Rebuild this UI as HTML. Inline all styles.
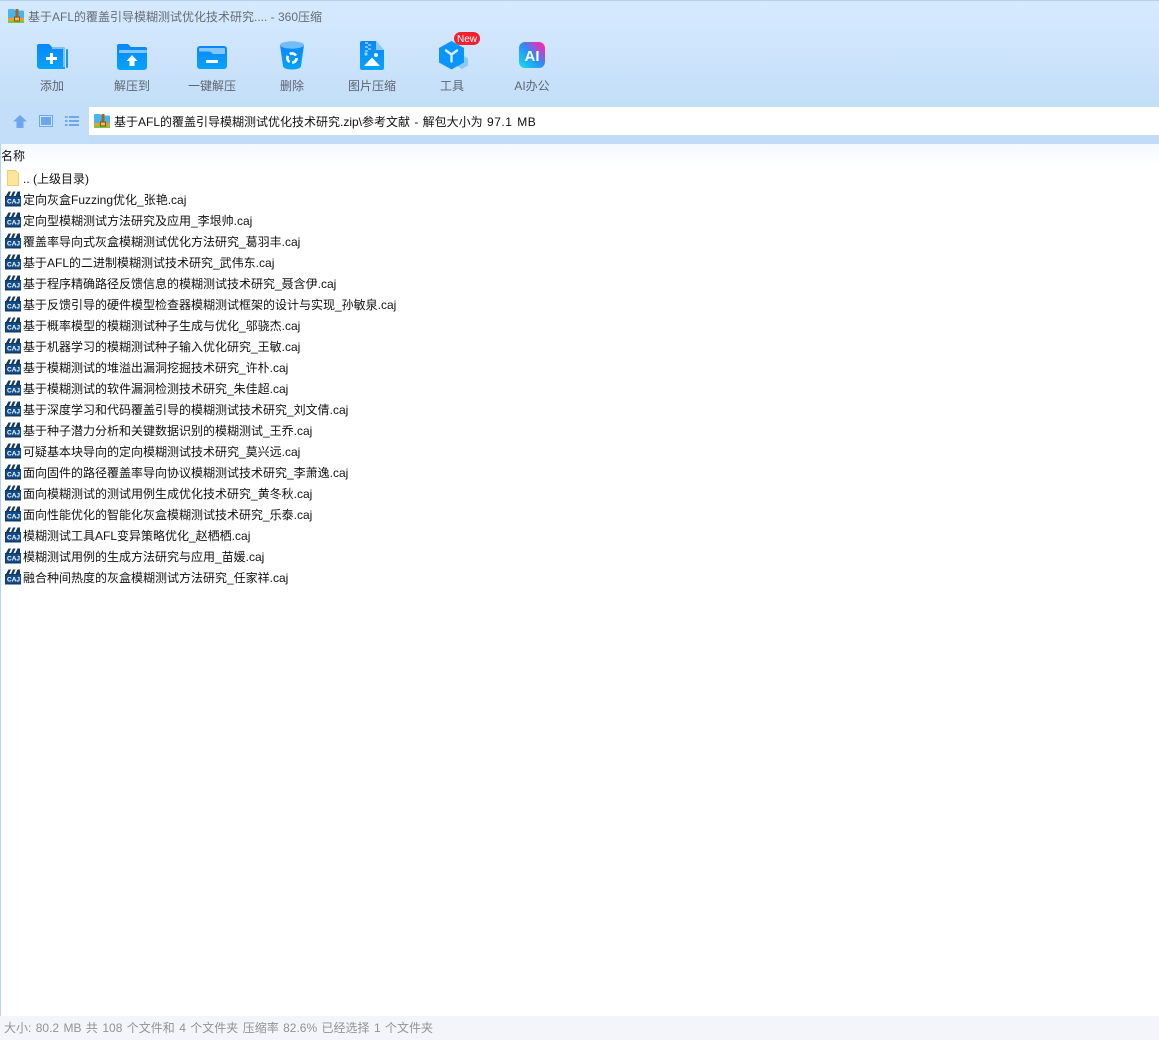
<!DOCTYPE html>
<html lang="zh"><head><meta charset="utf-8"><style>
*{box-sizing:border-box;margin:0;padding:0}
html,body{width:1159px;height:1040px;overflow:hidden;background:#fff;font-family:"Liberation Sans","Noto Sans CJK SC",sans-serif;font-size:12px;color:#111}
#top{position:absolute;left:0;top:0;width:1159px;height:107px;background:linear-gradient(#d6eaff,#c3def8);border-top:1px solid #b4d2ef}
#title{position:absolute;left:28px;top:9px;line-height:17px;color:#666c75;font-size:12px;white-space:nowrap}
.tb{position:absolute;top:78px;width:80px;text-align:center;line-height:16px;color:#5d6570;white-space:nowrap}
.i{position:absolute;overflow:visible}
#addr{position:absolute;left:89px;top:107px;width:1070px;height:28px;background:#fff;line-height:30px;padding-left:25px;color:#111;white-space:nowrap;word-spacing:1px}
#addr b{font-weight:400;letter-spacing:.5px}
#band{position:absolute;left:0;top:107px;width:89px;height:37px;background:#c3def8}
#band2{position:absolute;left:89px;top:135px;width:1070px;height:9px;background:#c2dcf7}
#grad{position:absolute;left:1px;top:144px;width:1158px;height:24px;background:linear-gradient(#f3f9ff,#fff)}
#ln{position:absolute;left:0;top:144px;width:1px;height:872px;background:#b5d4f4}
#hd{position:absolute;left:1px;top:148px;line-height:17px;color:#111}
.r{position:absolute;left:23px;margin-top:1px;line-height:17px;white-space:nowrap;color:#111}
#st{position:absolute;left:0;top:1016px;width:1159px;height:24px;background:#f3f5fa;color:#939393;line-height:25px;padding-left:4px;white-space:nowrap;word-spacing:1.08px}
</style></head><body>
<svg width="0" height="0" style="position:absolute"><defs>
<linearGradient id="b" x1="0" y1="0" x2="0" y2="1"><stop offset="0" stop-color="#0a86fb"/><stop offset="1" stop-color="#05a3fd"/></linearGradient>
<linearGradient id="ai" x1="0" y1="1" x2="1" y2="0"><stop offset="0" stop-color="#12e0ee"/><stop offset=".5" stop-color="#2a8ff5"/><stop offset=".85" stop-color="#e62fc0"/><stop offset="1" stop-color="#f5467a"/></linearGradient>
<symbol id="zip" viewBox="0 0 16 14"><path d="M1 0h5l1.500 1.500H15a1 1 0 0 1 1 1V9H0V1a1 1 0 0 1 1-1z" fill="#45b5f1"/><rect y="9" width="16" height="2.500" fill="#f79a1e"/><rect y="11.500" width="16" height="2.500" fill="#7cc54a"/><rect x="7.500" y="0" width="3" height="8" fill="#a5651f"/><rect x="6.500" y="8" width="5" height="4" fill="#f0c040" stroke="#8a4f12" stroke-width="1"/></symbol>
<symbol id="caj" viewBox="0 0 17 17"><path d="M1 6 3.500 1.500H6L4 6h2L8 1.500h2.500L8.500 6h2L12.500 1.500H15V6h1v10.500H0V6z" fill="#143a63"/><rect x="1" y="7" width="15" height="8" fill="#0f4d8c"/><text x="8.500" y="13.500" text-anchor="middle" font-size="6.500" font-weight="700" fill="#fff" font-family="Liberation Sans" textLength="13" lengthAdjust="spacingAndGlyphs">CAJ</text></symbol>
</defs></svg>
<div id="top"></div>
<svg class="i" style="left:8px;top:9px" width="16" height="14"><use href="#zip"/></svg>
<div id="title">基于AFL的覆盖引导模糊测试优化技术研究.... - 360压缩</div>

<svg class="i" style="left:37px;top:44px" width="31" height="26" viewBox="0 0 31 26"><path d="M2 0h10l3 3h11a2 2 0 0 1 2 2v20H3a3 3 0 0 1-3-3V2a2 2 0 0 1 2-2z" fill="url(#b)"/><path d="M15 3h11a2 2 0 0 1 2 2v18h-2V5H15z" fill="#7cc0fb"/><rect x="29" y="5" width="2" height="19" rx="1" fill="#1b94f6"/><path d="M13 9h3v4h4v3h-4v4h-3v-4H9v-3h4z" fill="#fff"/></svg>
<div class="tb" style="left:12px">添加</div>

<svg class="i" style="left:117px;top:44px" width="30" height="26" viewBox="0 0 30 26"><path d="M2 0h9l3 3h14a2 2 0 0 1 2 2v18a3 3 0 0 1-3 3H3a3 3 0 0 1-3-3V2a2 2 0 0 1 2-2z" fill="url(#b)"/><rect x="2" y="6" width="28" height="3" rx="1" fill="#83c6fb"/><path d="M15 11l5.500 6H17.500v5h-5v-5H9.500z" fill="#fff"/></svg>
<div class="tb" style="left:92px">解压到</div>

<svg class="i" style="left:197px;top:46px" width="30" height="24" viewBox="0 0 30 24"><rect width="30" height="23" rx="3" fill="url(#b)"/><path d="M3 2h24a1 1 0 0 1 1 1v5H16l-3-2.500H2V3a1 1 0 0 1 1-1z" fill="#83c6fb"/><rect x="9" y="14" width="12" height="3" rx="1" fill="#fff"/></svg>
<div class="tb" style="left:172px">一键解压</div>

<svg class="i" style="left:280px;top:41px" width="24" height="29" viewBox="0 0 24 29"><path d="M0 4 3 25c.4 2 3 3.500 9 3.500s8.600-1.500 9-3.500L24 4z" fill="url(#b)"/><ellipse cx="12" cy="4" rx="12" ry="3.700" fill="#72bdfb"/><circle cx="12" cy="17" r="4.600" fill="none" stroke="#fff" stroke-width="2.600" stroke-dasharray="7 2.600"/></svg>
<div class="tb" style="left:252px">删除</div>

<svg class="i" style="left:360px;top:41px" width="24" height="29" viewBox="0 0 24 29"><path d="M2 0h14l8 9v18a2 2 0 0 1-2 2H2a2 2 0 0 1-2-2V2a2 2 0 0 1 2-2z" fill="url(#b)"/><path d="M16 0l8 9h-8z" fill="#8cc8f8"/><path d="M5 1h3v2H5zM8 3h3v2H8zM5 5h3v2H5zM8 7h3v2H8zM5 9h3v2H5z" fill="#7cc0fb"/><circle cx="6" cy="13" r="1.600" fill="#9ed2fb"/><circle cx="16" cy="14" r="2" fill="#fff"/><path d="M4 25 12 16.500 20 25z" fill="#fff"/></svg>
<div class="tb" style="left:332px">图片压缩</div>

<svg class="i" style="left:439px;top:41px" width="30" height="29" viewBox="0 0 30 29"><path d="M23 14l6 3.500v7L23 28l-6-3.500v-7z" fill="#8cc6fb"/><path d="M12.500 0 25 7v14.500L12.500 28.500 0 21.500V7z" fill="#0a95fb"/><path d="M7 9.500l5.500 4 5.500-4M12.500 13.500V20.500" fill="none" stroke="#d8f0ff" stroke-width="2.400" stroke-linecap="round"/></svg>
<svg class="i" style="left:454px;top:32px" width="26" height="13" viewBox="0 0 26 13"><rect width="26" height="13" rx="6.500" fill="#f3212f"/><text x="13" y="10" text-anchor="middle" font-size="10" fill="#fff" font-family="Liberation Sans">New</text></svg>
<div class="tb" style="left:412px">工具</div>

<svg class="i" style="left:519px;top:42px" width="26" height="26" viewBox="0 0 26 26"><rect width="26" height="26" rx="6" fill="url(#ai)"/><text x="13" y="19" text-anchor="middle" font-size="15" font-weight="700" fill="#fff" font-family="Liberation Sans">AI</text></svg>
<div class="tb" style="left:492px">AI办公</div>

<div id="band"></div><div id="band2"></div>
<svg class="i" style="left:13px;top:115px" width="14" height="13" viewBox="0 0 14 13"><path d="M7 0 14 6.500H10.500V13H3.500V6.500H0z" fill="#6ba6ee"/></svg>
<svg class="i" style="left:39px;top:115px" width="14" height="12" viewBox="0 0 14 12"><rect x=".5" y=".5" width="13" height="11" fill="#cfe3fa" stroke="#6ba6ee"/><rect x="2" y="2" width="10" height="8" fill="#6ba6ee"/></svg>
<svg class="i" style="left:65px;top:115px" width="14" height="12" viewBox="0 0 14 12"><path d="M0 1h2.500v2H0zM4 1h10v2H4zM0 5h2.500v2H0zM4 5h10v2H4zM0 9h2.500v2H0zM4 9h10v2H4z" fill="#6ba6ee"/></svg>
<div id="addr">基于AFL的覆盖引导模糊测试优化技术研究.zip\参考文献 - 解包大小为 <b>97.1 MB</b></div>
<svg class="i" style="left:94px;top:114px" width="16" height="14"><use href="#zip"/></svg>
<div id="grad"></div><div id="ln"></div>
<div id="hd">名称</div>

<svg class="i" style="left:7px;top:170px" width="12" height="16" viewBox="0 0 12 16"><path d="M.500.500h7.500l3.500 3v12H.500z" fill="#fde59b" stroke="#f0cc70"/></svg>
<div class="r" style="top:170px">.. (上级目录)</div>

<svg class="i" style="left:5px;top:190px" width="17" height="17"><use href="#caj"/></svg><div class="r" style="top:191px">定向灰盒Fuzzing优化_张艳.caj</div>
<svg class="i" style="left:5px;top:211px" width="17" height="17"><use href="#caj"/></svg><div class="r" style="top:212px">定向型模糊测试方法研究及应用_李垠帅.caj</div>
<svg class="i" style="left:5px;top:232px" width="17" height="17"><use href="#caj"/></svg><div class="r" style="top:233px">覆盖率导向式灰盒模糊测试优化方法研究_葛羽丰.caj</div>
<svg class="i" style="left:5px;top:253px" width="17" height="17"><use href="#caj"/></svg><div class="r" style="top:254px">基于AFL的二进制模糊测试技术研究_武伟东.caj</div>
<svg class="i" style="left:5px;top:274px" width="17" height="17"><use href="#caj"/></svg><div class="r" style="top:275px">基于程序精确路径反馈信息的模糊测试技术研究_聂含伊.caj</div>
<svg class="i" style="left:5px;top:295px" width="17" height="17"><use href="#caj"/></svg><div class="r" style="top:296px">基于反馈引导的硬件模型检查器模糊测试框架的设计与实现_孙敏泉.caj</div>
<svg class="i" style="left:5px;top:316px" width="17" height="17"><use href="#caj"/></svg><div class="r" style="top:317px">基于概率模型的模糊测试种子生成与优化_邬骁杰.caj</div>
<svg class="i" style="left:5px;top:337px" width="17" height="17"><use href="#caj"/></svg><div class="r" style="top:338px">基于机器学习的模糊测试种子输入优化研究_王敏.caj</div>
<svg class="i" style="left:5px;top:358px" width="17" height="17"><use href="#caj"/></svg><div class="r" style="top:359px">基于模糊测试的堆溢出漏洞挖掘技术研究_许朴.caj</div>
<svg class="i" style="left:5px;top:379px" width="17" height="17"><use href="#caj"/></svg><div class="r" style="top:380px">基于模糊测试的软件漏洞检测技术研究_朱佳超.caj</div>
<svg class="i" style="left:5px;top:400px" width="17" height="17"><use href="#caj"/></svg><div class="r" style="top:401px">基于深度学习和代码覆盖引导的模糊测试技术研究_刘文倩.caj</div>
<svg class="i" style="left:5px;top:421px" width="17" height="17"><use href="#caj"/></svg><div class="r" style="top:422px">基于种子潜力分析和关键数据识别的模糊测试_王乔.caj</div>
<svg class="i" style="left:5px;top:442px" width="17" height="17"><use href="#caj"/></svg><div class="r" style="top:443px">可疑基本块导向的定向模糊测试技术研究_莫兴远.caj</div>
<svg class="i" style="left:5px;top:463px" width="17" height="17"><use href="#caj"/></svg><div class="r" style="top:464px">面向固件的路径覆盖率导向协议模糊测试技术研究_李萧逸.caj</div>
<svg class="i" style="left:5px;top:484px" width="17" height="17"><use href="#caj"/></svg><div class="r" style="top:485px">面向模糊测试的测试用例生成优化技术研究_黄冬秋.caj</div>
<svg class="i" style="left:5px;top:505px" width="17" height="17"><use href="#caj"/></svg><div class="r" style="top:506px">面向性能优化的智能化灰盒模糊测试技术研究_乐泰.caj</div>
<svg class="i" style="left:5px;top:526px" width="17" height="17"><use href="#caj"/></svg><div class="r" style="top:527px">模糊测试工具AFL变异策略优化_赵栖栖.caj</div>
<svg class="i" style="left:5px;top:547px" width="17" height="17"><use href="#caj"/></svg><div class="r" style="top:548px">模糊测试用例的生成方法研究与应用_苗媛.caj</div>
<svg class="i" style="left:5px;top:568px" width="17" height="17"><use href="#caj"/></svg><div class="r" style="top:569px">融合种间热度的灰盒模糊测试方法研究_任家祥.caj</div>

<div id="st">大小: 80.2 MB 共 108 个文件和 4 个文件夹 压缩率 82.6% 已经选择 1 个文件夹</div>
</body></html>
